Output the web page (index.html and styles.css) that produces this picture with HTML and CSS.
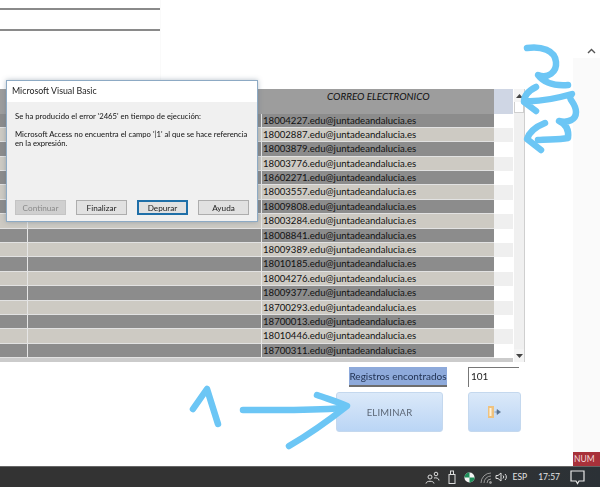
FILE: index.html
```html
<!DOCTYPE html>
<html lang="es">
<head>
<meta charset="utf-8">
<title>Microsoft Visual Basic</title>
<link rel="stylesheet" href="styles.css">
</head>
<body>
<div class="screen">
  <div class="workspace">
    <main class="form">
      <div class="top-fields">
        <div class="field-line"></div>
        <div class="field-line"></div>
      </div>
      <div class="grid-wrap">
        <div class="grid">
          <div class="head-row">
            <div class="c1"></div><div class="c2"></div><div class="c3 head-title">CORREO ELECTRONICO</div><div class="sel sel-head"></div>
          </div>
          <div class="row dark"><div class="c1"></div><div class="c2"></div><div class="c3">18004227.edu@juntadeandalucia.es</div><div class="sel"></div></div>
          <div class="row light"><div class="c1"></div><div class="c2"></div><div class="c3">18002887.edu@juntadeandalucia.es</div><div class="sel"></div></div>
          <div class="row dark"><div class="c1"></div><div class="c2"></div><div class="c3">18003879.edu@juntadeandalucia.es</div><div class="sel"></div></div>
          <div class="row light"><div class="c1"></div><div class="c2"></div><div class="c3">18003776.edu@juntadeandalucia.es</div><div class="sel"></div></div>
          <div class="row dark"><div class="c1"></div><div class="c2"></div><div class="c3">18602271.edu@juntadeandalucia.es</div><div class="sel"></div></div>
          <div class="row light"><div class="c1"></div><div class="c2"></div><div class="c3">18003557.edu@juntadeandalucia.es</div><div class="sel"></div></div>
          <div class="row dark"><div class="c1"></div><div class="c2"></div><div class="c3">18009808.edu@juntadeandalucia.es</div><div class="sel"></div></div>
          <div class="row light"><div class="c1"></div><div class="c2"></div><div class="c3">18003284.edu@juntadeandalucia.es</div><div class="sel"></div></div>
          <div class="row dark"><div class="c1"></div><div class="c2"></div><div class="c3">18008841.edu@juntadeandalucia.es</div><div class="sel"></div></div>
          <div class="row light"><div class="c1"></div><div class="c2"></div><div class="c3">18009389.edu@juntadeandalucia.es</div><div class="sel"></div></div>
          <div class="row dark"><div class="c1"></div><div class="c2"></div><div class="c3">18010185.edu@juntadeandalucia.es</div><div class="sel"></div></div>
          <div class="row light"><div class="c1"></div><div class="c2"></div><div class="c3">18004276.edu@juntadeandalucia.es</div><div class="sel"></div></div>
          <div class="row dark"><div class="c1"></div><div class="c2"></div><div class="c3">18009377.edu@juntadeandalucia.es</div><div class="sel"></div></div>
          <div class="row light"><div class="c1"></div><div class="c2"></div><div class="c3">18700293.edu@juntadeandalucia.es</div><div class="sel"></div></div>
          <div class="row dark"><div class="c1"></div><div class="c2"></div><div class="c3">18700013.edu@juntadeandalucia.es</div><div class="sel"></div></div>
          <div class="row light"><div class="c1"></div><div class="c2"></div><div class="c3">18010446.edu@juntadeandalucia.es</div><div class="sel"></div></div>
          <div class="row dark"><div class="c1"></div><div class="c2"></div><div class="c3">18700311.edu@juntadeandalucia.es</div><div class="sel"></div></div>
        </div>
        <div class="scrollbar">
          <div class="sb-btn"><svg width="7" height="4" viewBox="0 0 7 4"><path d="M3.500 0L7 4H0z" fill="#444"/></svg></div>
          <div class="sb-thumb"></div>
          <div class="sb-track"></div>
          <div class="sb-btn sb-down"><svg width="7" height="4" viewBox="0 0 7 4"><path d="M0 0H7L3.500 4z" fill="#444"/></svg></div>
        </div>
      </div>
      <div class="count-row">
        <div class="count-label">Registros encontrados</div>
        <div class="count-value">101</div>
      </div>
      <div class="action-row">
        <button class="action action-del" type="button">ELIMINAR</button>
        <button class="action action-exit" type="button" aria-label="Salir">
          <svg width="13" height="12" viewBox="0 0 13 12"><rect x="0" y="0" width="6" height="12" fill="#efc27f"/><rect x="1.500" y="2" width="2" height="8" fill="#fff3dc"/><path d="M6.500 6H9V3.500L12.500 6L9 8.500V6" fill="#5a7390" stroke="#5a7390" stroke-width=".6"/></svg>
        </button>
      </div>
    </main>
    <aside class="side">
      <div class="side-chevron"><svg width="9" height="6" viewBox="0 0 9 6"><path d="M1 5L4.500 1.500L8 5" fill="none" stroke="#555" stroke-width="1.400"/></svg></div>
      <div class="side-panel"></div>
      <div class="num">NUM</div>
    </aside>
  </div>
  <footer class="taskbar">
    <svg class="tray-people" width="15" height="13" viewBox="0 0 15 13" fill="none" stroke="#ddd" stroke-width="1"><circle cx="5" cy="6" r="2"/><path d="M1 12.500C1 9.500 9 9.500 9 12.500"/><circle cx="11" cy="3" r="1.800"/><path d="M9 7C11 6.500 14 7 14 9.500"/></svg>
    <svg class="tray-usb" width="8" height="14" viewBox="0 0 8 14" fill="none" stroke="#ddd" stroke-width="1"><rect x="1" y="4.500" width="6" height="9"/><rect x="2.500" y="1" width="3" height="3.500"/></svg>
    <svg class="tray-shield" width="11" height="11" viewBox="0 0 13 13"><circle cx="6.500" cy="6.500" r="6" fill="#f4f4f4"/><path d="M6.500 .5A6 6 0 0 0 .5 6.500H6.500zM6.500 6.500V12.500A6 6 0 0 0 12.500 6.500z" fill="#1f8f5a"/></svg>
    <svg class="tray-wifi" width="14" height="13" viewBox="0 0 14 13" fill="none" stroke="#999" stroke-width="1"><path d="M2 12A10 10 0 0 1 12 2M5 12A7 7 0 0 1 12 5M8 12A4 4 0 0 1 12 8"/><circle cx="11.500" cy="11.500" r="1" fill="#999"/></svg>
    <svg class="tray-vol" width="13" height="12" viewBox="0 0 13 12" fill="none" stroke="#ddd" stroke-width="1"><path d="M1 4.500H3L6 2V10L3 7.500H1z"/><path d="M8 4.500A2 2 0 0 1 8 7.500M10 3A4 4 0 0 1 10 9"/></svg>
    <span class="tray-text tray-lang">ESP</span>
    <span class="tray-text tray-time">17:57</span>
    <svg class="tray-note" width="15" height="15" viewBox="0 0 15 15" fill="none" stroke="#e8e8e8" stroke-width="1.200"><path d="M1 1H14V11H9L7.500 13.500L6 11H1z"/></svg>
  </footer>

  <section class="dialog">
    <header class="dialog-title">Microsoft Visual Basic</header>
    <div class="dialog-body">
      <p class="msg-first">Se ha producido el error '2465' en tiempo de ejecución:</p>
      <p class="msg-second">Microsoft Access no encuentra el campo '|1' al que se hace referencia en la expresión.</p>
      <div class="dialog-buttons">
        <button class="dlg-btn dlg-off" type="button">Continuar</button>
        <button class="dlg-btn" type="button">Finalizar</button>
        <button class="dlg-btn dlg-default" type="button">Depurar</button>
        <button class="dlg-btn" type="button">Ayuda</button>
      </div>
    </div>
  </section>

  <svg class="scribbles" width="600" height="487" viewBox="0 0 600 487" fill="none" stroke="#6cc6f5" stroke-width="6.500" stroke-linecap="round" stroke-linejoin="round">
    <path d="M527 48C541 46 555 50 556 62C557 72 548 79 538 75C545 84 555 86 568 85"/>
    <path d="M536 87C528 91 524 96 524 102L536 111M525 101C540 102 558 98 572 94C566 99 576 102 576 112C576 120 568 123 559 121C566 124 569 130 568 138C558 140 548 139 538 140"/>
    <path d="M545 123C535 127 529 133 527 139L541 150"/>
    <path d="M193 409L207 389L218 424"/>
    <path d="M243 410C275 410 305 411 343 408"/>
    <path d="M317 395C328 399 338 402 347 406C328 421 308 435 289 446"/>
  </svg>
</div>
</body>
</html>
```

FILE: styles.css
```css
* { box-sizing: border-box; }
html, body { margin: 0; padding: 0; }
body { width: 600px; height: 487px; overflow: hidden; background: #fff; }
.screen { position: relative; width: 600px; height: 487px; display: flex; flex-direction: column; font-family: "Lato", "Open Sans", sans-serif; color: #222; filter: blur(.35px); }
.workspace { flex: 0 0 466px; display: flex; }
.form { flex: 0 0 573px; display: flex; flex-direction: column; }
.top-fields { height: 89px; width: 161px; padding-top: 8px; border-right: 1px solid #fafafa; }
.field-line { height: 2px; background: #8a8a8a; margin-bottom: 19px; }
.grid-wrap { width: 525px; height: 273px; display: flex; background: #cfcfcf; }
.grid { width: 513px; height: 273px; background: #fff; border-bottom: 5px solid #cbcbcb; }
.head-row { display: flex; height: 24.500px; background: #9d9d9d; }
.row { display: flex; height: 14.400px; border-bottom: 1.200px solid #e2e2e2; }
.dark { background: #8c8c8c; }
.light { background: #cdcac3; }
.c1 { flex: 0 0 28px; border-right: 1px solid #e6e6e6; }
.c2 { flex: 0 0 234px; border-right: 1px solid #e6e6e6; }
.head-row .c1, .head-row .c2 { border-right-color: #9d9d9d; }
.c3 { flex: 0 0 232px; padding-left: 1px; font-size: 9.600px; line-height: 13px; color: #111; white-space: nowrap; overflow: hidden; }
.head-title { padding: 1px 0 0 65px; font-style: italic; font-size: 9.900px; line-height: 13px; }
.sel { flex: 0 0 19px; background: #fff; margin-bottom: -1.200px; }
.light .sel { background: #efefef; }
.sel-head { background: #cfd6e4; margin-bottom: 0; }
.scrollbar { width: 12px; display: flex; flex-direction: column; background: #f0f0f0; border-right: 1px solid #cfcfcf; border-left: 1px solid #fff; }
.sb-btn { height: 13px; flex: none; display: flex; align-items: center; justify-content: center; background: #f4f4f4; }
.sb-thumb { height: 11px; flex: none; background: #fff; border: 1px solid #cfcfcf; border-top: 0; }
.sb-track { flex: 1; }
.count-row { display: flex; height: 30px; padding: 5px 0 0 349px; }
.count-label { width: 98px; height: 20px; background: #8eaadb; border-bottom: 2px solid #6d6d6d; font-size: 10px; line-height: 18px; text-align: center; white-space: nowrap; color: #1f3050; }
.count-value { width: 51px; height: 20px; margin-left: 21px; background: #fff; border-top: 1px solid #777; border-left: 1px solid #777; font-size: 10px; line-height: 17px; padding-left: 2px; }
.action-row { display: flex; padding-left: 336px; }
.action { height: 40px; padding: 0; border: 1px solid #c4d8ee; border-radius: 3px; background: linear-gradient(#dbe9f9, #bad5f5); font-family: inherit; font-size: 9.500px; letter-spacing: .2px; color: #5b6675; display: flex; align-items: center; justify-content: center; }
.action-del { width: 107px; }
.action-exit { width: 53px; margin-left: 25px; }
.side { flex: 1; display: flex; flex-direction: column; }
.side-chevron { height: 58px; padding: 48px 0 0 14px; line-height: 0; }
.side-panel { flex: 1; background: #fafafa; }
.num { height: 14px; background: #a8313a; color: #f2d8d8; font-size: 8.500px; line-height: 14px; padding-left: 1px; }
.taskbar { flex: 1; display: flex; align-items: center; justify-content: flex-end; padding-right: 15px; background: linear-gradient(90deg, #333 0%, #333 70%, #2b3136 100%); border-top: 1px solid #666; }
.tray-people { margin-right: 8px; }
.tray-usb { margin-right: 8px; }
.tray-shield { margin-right: 4px; }
.tray-wifi { margin-right: 2px; }
.tray-vol { margin-right: 5px; }
.tray-text { color: #e4e4e4; font-size: 8.500px; }
.tray-lang { margin-right: 11px; }
.tray-time { margin-right: 10px; }
.dialog { position: absolute; left: 6px; top: 80px; width: 252px; height: 142px; display: flex; flex-direction: column; background: #f0f0f0; border: 1px solid #8daac4; box-shadow: 0 0 5px rgba(90,110,130,.45); }
.dialog-title { height: 21px; flex: none; background: #fff; padding-left: 5px; font-size: 8.800px; line-height: 19px; color: #222; }
.dialog-body { flex: 1; display: flex; flex-direction: column; padding: 10px 8px 6px; font-size: 7.700px; line-height: 9.500px; color: #111; }
.dialog-body p { margin: 0; }
.msg-first { margin-bottom: 8px !important; }
.msg-second { flex: 1; }
.dialog-buttons { display: flex; gap: 10px; }
.dlg-btn { width: 51px; height: 15px; padding: 0; background: #e1e1e1; border: 1px solid #adadad; font-family: inherit; font-size: 8.200px; line-height: 12px; color: #222; }
.dlg-off { background: #cfcfcf; border-color: #c4c4c4; color: #8a8a8a; }
.dlg-default { border: 2px solid #1f6fa8; line-height: 10px; }
.scribbles { position: absolute; left: 0; top: 0; pointer-events: none; }
```
